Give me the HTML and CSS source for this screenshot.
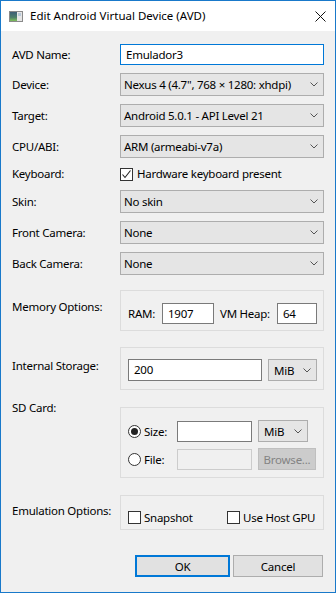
FILE: index.html
```html
<!DOCTYPE html>
<html lang="en">
<head>
    <meta charset="UTF-8">
    <meta name="viewport" content="width=device-width, initial-scale=1.0">
    <title>Edit Android Virtual Device (AVD)</title>
    <link rel="stylesheet" href="styles.css">
</head>
<body>
    <div class="window">
        <div class="titlebar">
            <svg class="app-icon" width="14" height="11" viewBox="0 0 14 11">
                <defs>
                    <linearGradient id="scr" x1="0" y1="0" x2="0" y2="1">
                        <stop offset="0" stop-color="#3d5f78"/>
                        <stop offset="0.6" stop-color="#4d7f6a"/>
                        <stop offset="1" stop-color="#7fbf5a"/>
                    </linearGradient>
                </defs>
                <rect x="0.5" y="0.5" width="13" height="10" fill="#e6e6e6" stroke="#8a8a8a"/>
                <rect x="1" y="1" width="7" height="9" fill="url(#scr)"/>
                <rect x="9" y="2" width="3" height="3" fill="#b9c9d9"/>
            </svg>
            <span class="title">Edit Android Virtual Device (AVD)</span>
            <svg class="close-icon" width="11" height="11" viewBox="0 0 11 11">
                <path d="M0.5 0.5 L10.5 10.5 M10.5 0.5 L0.5 10.5" stroke="#111" stroke-width="1" fill="none"/>
            </svg>
        </div>

        <div class="content">
            <div class="row row-first">
                <span class="label">AVD Name:</span>
                <div class="textbox focused wide">Emulador3</div>
            </div>
            <div class="row">
                <span class="label">Device:</span>
                <div class="combo wide"><span>Nexus 4 (4.7", 768 × 1280: xhdpi)</span><svg class="arrow" width="8" height="5" viewBox="0 0 8 5"><path d="M0.5 0.5 L4 4 L7.5 0.5" stroke="#555" fill="none"/></svg></div>
            </div>
            <div class="row">
                <span class="label">Target:</span>
                <div class="combo wide"><span>Android 5.0.1 - API Level 21</span><svg class="arrow" width="8" height="5" viewBox="0 0 8 5"><path d="M0.5 0.5 L4 4 L7.5 0.5" stroke="#555" fill="none"/></svg></div>
            </div>
            <div class="row">
                <span class="label">CPU/ABI:</span>
                <div class="combo wide"><span>ARM (armeabi-v7a)</span><svg class="arrow" width="8" height="5" viewBox="0 0 8 5"><path d="M0.5 0.5 L4 4 L7.5 0.5" stroke="#555" fill="none"/></svg></div>
            </div>
            <div class="row row-check">
                <span class="label">Keyboard:</span>
                <span class="checkbox checked"><svg width="11" height="11" viewBox="0 0 11 11"><path d="M1.5 5.5 L4 8.5 L9.5 1.5" stroke="#222" stroke-width="1.1" fill="none"/></svg></span>
                <span class="check-text">Hardware keyboard present</span>
            </div>
            <div class="row">
                <span class="label">Skin:</span>
                <div class="combo wide"><span>No skin</span><svg class="arrow" width="8" height="5" viewBox="0 0 8 5"><path d="M0.5 0.5 L4 4 L7.5 0.5" stroke="#555" fill="none"/></svg></div>
            </div>
            <div class="row">
                <span class="label">Front Camera:</span>
                <div class="combo wide"><span>None</span><svg class="arrow" width="8" height="5" viewBox="0 0 8 5"><path d="M0.5 0.5 L4 4 L7.5 0.5" stroke="#555" fill="none"/></svg></div>
            </div>
            <div class="row">
                <span class="label">Back Camera:</span>
                <div class="combo wide"><span>None</span><svg class="arrow" width="8" height="5" viewBox="0 0 8 5"><path d="M0.5 0.5 L4 4 L7.5 0.5" stroke="#555" fill="none"/></svg></div>
            </div>

            <div class="row row-group memory-row">
                <span class="label">Memory Options:</span>
                <div class="group memory">
                    <span class="inline-label ram-label">RAM:</span>
                    <div class="textbox ram">1907</div>
                    <span class="inline-label heap-label">VM Heap:</span>
                    <div class="textbox heap">64</div>
                </div>
            </div>

            <div class="row row-group storage-row">
                <span class="label">Internal Storage:</span>
                <div class="group storage">
                    <div class="textbox storage-size">200</div>
                    <div class="combo unit"><span>MiB</span><svg class="arrow" width="8" height="5" viewBox="0 0 8 5"><path d="M0.5 0.5 L4 4 L7.5 0.5" stroke="#555" fill="none"/></svg></div>
                </div>
            </div>

            <div class="row row-group sd-row">
                <span class="label">SD Card:</span>
                <div class="group sdcard">
                    <div class="sd-line">
                        <span class="radio-item"><span class="radio selected"></span>Size:</span>
                        <div class="textbox sd-field"></div>
                        <div class="combo unit sd-unit"><span>MiB</span><svg class="arrow" width="8" height="5" viewBox="0 0 8 5"><path d="M0.5 0.5 L4 4 L7.5 0.5" stroke="#555" fill="none"/></svg></div>
                    </div>
                    <div class="sd-line">
                        <span class="radio-item"><span class="radio"></span>File:</span>
                        <div class="textbox sd-field disabled"></div>
                        <div class="button browse">Browse...</div>
                    </div>
                </div>
            </div>

            <div class="row row-group emu-row">
                <span class="label">Emulation Options:</span>
                <div class="group emulation">
                    <span class="check-item snapshot"><span class="checkbox"></span>Snapshot</span>
                    <span class="check-item"><span class="checkbox"></span>Use Host GPU</span>
                </div>
            </div>

            <div class="actions">
                <div class="button default ok">OK</div>
                <div class="button cancel">Cancel</div>
            </div>
        </div>
    </div>
</body>
</html>
```

FILE: styles.css
```css
body {
    margin: 0;
    font-family: "Noto Sans", "Open Sans", sans-serif;
    font-size: 11.5px;
    letter-spacing: -0.25px;
    color: #000;
    background: #f0f0f0;
}
.window {
    width: 336px;
    height: 593px;
    box-sizing: border-box;
    border: 1px solid #1979ca;
    background: #f0f0f0;
}
.titlebar {
    height: 30px;
    background: #fff;
    display: flex;
    align-items: center;
    padding: 0 9px 0 8px;
}
.app-icon {
    margin-top: 1px;
}
.title {
    margin-left: 7px;
    line-height: 16px;
    letter-spacing: 0;
}
.close-icon {
    margin-left: auto;
}
.content {
    padding: 0 11px;
}
.row {
    display: flex;
    align-items: center;
    margin-top: 8px;
}
.row-first {
    margin-top: 13px;
}
.label {
    width: 108px;
    flex-shrink: 0;
    line-height: 16px;
    white-space: nowrap;
}

/* controls */
.textbox {
    box-sizing: border-box;
    height: 21px;
    background: #fff;
    border: 1px solid #7a7a7a;
    padding: 0 5px;
    line-height: 19px;
    white-space: nowrap;
}
.textbox.focused {
    border-color: #0078d7;
}
.textbox.disabled {
    background: #f0f0f0;
    border-color: #cccccc;
}
.wide {
    width: 204px;
}
.combo {
    box-sizing: border-box;
    height: 23px;
    background: #e5e5e5;
    border: 1px solid #adadad;
    padding: 0 5px 0 3px;
    display: flex;
    align-items: center;
    white-space: nowrap;
}
.combo .arrow {
    margin-left: auto;
    flex-shrink: 0;
}
.checkbox {
    box-sizing: border-box;
    width: 13px;
    height: 13px;
    border: 1px solid #333;
    background: #fff;
    display: inline-flex;
    align-items: center;
    justify-content: center;
    flex-shrink: 0;
}
.row-check {
    height: 16px;
}
.check-text {
    margin-left: 4px;
    line-height: 16px;
}
.button {
    box-sizing: border-box;
    height: 22px;
    background: #e1e1e1;
    border: 1px solid #adadad;
    display: flex;
    align-items: center;
    justify-content: center;
}

/* grouped sections */
.row-group {
    align-items: flex-start;
}
.group {
    box-sizing: border-box;
    width: 204px;
    border: 1px solid #dcdcdc;
    padding-left: 7px;
}
.memory-row {
    margin-top: 15px;
}
.memory-row .label {
    padding-top: 9px;
}
.memory {
    height: 41px;
    padding-top: 12px;
    display: flex;
    align-items: flex-start;
}
.inline-label {
    line-height: 21px;
}
.ram-label {
    width: 34px;
}
.ram {
    width: 52px;
}
.heap-label {
    width: 57px;
    margin-left: 6px;
}
.heap {
    width: 40px;
}
.storage-row {
    margin-top: 16px;
}
.storage-row .label {
    padding-top: 11px;
}
.storage {
    height: 43px;
    padding-top: 11px;
    display: flex;
    gap: 6px;
}
.storage-size {
    width: 134px;
    height: 22px;
    line-height: 20px;
}
.unit {
    width: 49px;
    height: 22px;
    padding-left: 5px;
}
.sd-row {
    margin-top: 17px;
}
.sd-row .label {
    margin-top: -7px;
}
.sdcard {
    height: 71px;
    padding-top: 12px;
    display: flex;
    flex-direction: column;
    gap: 6px;
}
.sd-line {
    display: flex;
    align-items: center;
    height: 22px;
}
.radio-item {
    width: 49px;
    display: flex;
    align-items: center;
    gap: 3px;
}
.radio {
    box-sizing: border-box;
    width: 13px;
    height: 13px;
    border: 1px solid #333;
    border-radius: 50%;
    background: #fff;
    display: inline-flex;
    align-items: center;
    justify-content: center;
}
.radio.selected::after {
    content: "";
    width: 7px;
    height: 7px;
    border-radius: 50%;
    background: #222;
}
.sd-field {
    width: 75px;
}
.sd-unit {
    width: 50px;
    margin-left: 6px;
}
.browse {
    width: 58px;
    margin-left: 6px;
    background: #cccccc;
    border-color: #bfbfbf;
    color: #838383;
}
.emu-row {
    margin-top: 17px;
}
.emu-row .label {
    padding-top: 8px;
}
.emulation {
    height: 35px;
    padding-top: 13px;
    display: flex;
}
.check-item {
    display: flex;
    align-items: center;
    gap: 3px;
    height: 16px;
}
.snapshot {
    width: 99px;
}

/* dialog buttons */
.actions {
    display: flex;
    justify-content: flex-end;
    gap: 3px;
    margin-top: 25px;
    padding-right: 1px;
}
.ok {
    width: 95px;
}
.cancel {
    width: 90px;
}
.button.default {
    border: 2px solid #0078d7;
}
```
